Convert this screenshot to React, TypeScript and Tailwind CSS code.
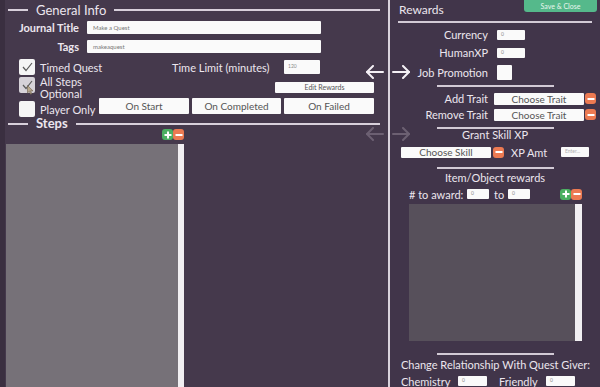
import React from 'react';

const font = { fontFamily: 'Lato, "Liberation Sans", sans-serif' };

function Arrow({ dir, faded }: { dir: 'left' | 'right'; faded?: boolean }) {
  const color = faded ? '#6c6072' : '#f4f0f5';
  return (
    <svg width="19" height="14" viewBox="0 0 19 14" fill="none" stroke={color} strokeWidth="2" strokeLinecap="round" strokeLinejoin="round">
      {dir === 'left' ? (
        <>
          <path d="M2 7 H18" />
          <path d="M8 1 L2 7 L8 13" />
        </>
      ) : (
        <>
          <path d="M1 7 H17" />
          <path d="M11 1 L17 7 L11 13" />
        </>
      )}
    </svg>
  );
}

function PlusBtn() {
  return (
    <div className="w-[11px] h-[11px] rounded-[3px] bg-[#4caf62] flex items-center justify-center">
      <svg width="8" height="8" viewBox="0 0 8 8" stroke="white" strokeWidth="2">
        <path d="M4 0.5 V7.5 M0.5 4 H7.5" />
      </svg>
    </div>
  );
}

function MinusBtn() {
  return (
    <div className="w-[11px] h-[11px] rounded-[3px] bg-[#ec7a52] flex items-center justify-center">
      <svg width="8" height="8" viewBox="0 0 8 8" stroke="white" strokeWidth="2">
        <path d="M0.5 4 H7.5" />
      </svg>
    </div>
  );
}

function Check({ shade }: { shade?: boolean }) {
  return (
    <div className={`w-[16px] h-[16px] rounded-[2px] flex items-center justify-center ${shade ? 'bg-[#d6d2d8]' : 'bg-[#f5f5f5]'}`}>
      <svg width="11" height="10" viewBox="0 0 11 10" fill="none" stroke="#5a5a5a" strokeWidth="1.2">
        <path d="M1 5 L4 8.5 L10 1" />
      </svg>
    </div>
  );
}

function SectionTitle({ children, bold }: { children: React.ReactNode; bold?: boolean }) {
  return (
    <div className="flex items-center h-full pr-[8px]">
      <div className="ml-[3px] w-[20px] h-[2px] bg-[#d8d0db]" />
      <span className={`mx-[8px] text-[13px] leading-none text-[#ece6ee] ${bold ? 'font-bold' : ''}`}>{children}</span>
      <div className="flex-1 h-[2px] bg-[#d8d0db]" />
    </div>
  );
}

function SmallInput({ value, w, h = 'h-[10px]', placeholder }: { value?: string; w: string; h?: string; placeholder?: string }) {
  return (
    <div className={`${w} ${h} bg-[#fafafa] rounded-[1px] flex items-center pl-[4px] text-[5px] ${placeholder ? 'text-[#b0b0b0]' : 'text-[#8a8a8a]'}`}>
      {value ?? placeholder}
    </div>
  );
}

function WhiteButton({ label, w, h, size }: { label: string; w: string; h: string; size: string }) {
  return (
    <div className={`${w} ${h} bg-[#fafafa] rounded-[1px] flex items-center justify-center ${size} text-[#555] leading-none`}>
      {label}
    </div>
  );
}

function Line() {
  return <div className="mx-auto w-[117px] h-[2px] bg-[#d2cad5]" />;
}

export default function App() {
  return (
    <div className="relative w-[600px] h-[387px] flex overflow-hidden bg-[#43374a] text-[#ece6ee]" style={font}>
      {/* left panel */}
      <div className="w-[388px] h-full flex flex-col border-l-[5px] border-[#3a2f40] bg-[#45394c]">
        <div className="h-[20px]">
          <SectionTitle>General Info</SectionTitle>
        </div>

        <div className="mt-[1px] h-[13px] flex items-center">
          <div className="w-[74px] text-right text-[11px] font-bold leading-none">Journal Title</div>
          <div className="ml-[8px] w-[234px] h-[13px] bg-[#fafafa] rounded-[1px] flex items-center pl-[6px] text-[6px] text-[#777]">Make a Quest</div>
        </div>
        <div className="mt-[6px] h-[13px] flex items-center">
          <div className="w-[74px] text-right text-[11px] font-bold leading-none">Tags</div>
          <div className="ml-[8px] w-[234px] h-[13px] bg-[#fafafa] rounded-[1px] flex items-center pl-[6px] text-[6px] text-[#777]">makeaquest</div>
        </div>

        {/* row: timed quest */}
        <div className="mt-[6px] h-[16px] w-[369px] flex items-center">
          <div className="ml-[14px]"><Check /></div>
          <div className="ml-[5px] w-[132px] text-[11px] leading-none">Timed Quest</div>
          <div className="w-[112px] text-[11px] leading-none">Time Limit (minutes)</div>
          <SmallInput value="120" w="w-[36px]" h="h-[14px]" />
        </div>

        {/* row: all steps optional */}
        <div className="mt-[2px] h-[19px] w-[369px] flex items-start">
          <div className="ml-[14px] relative">
            <Check shade />
            <svg className="absolute left-[8px] top-[8px]" width="7" height="10" viewBox="0 0 7 10">
              <path d="M0.5 0.5 L0.5 8 L2.3 6.3 L3.6 9.3 L4.8 8.8 L3.6 5.9 L6 5.9 Z" fill="#b9a88b" stroke="#6b5f4f" strokeWidth="0.6" />
            </svg>
          </div>
          <div className="ml-[5px] text-[11px] leading-[12px] -mt-[1px]">All Steps<br />Optional</div>
          <div className="ml-auto mt-[5px]">
            <WhiteButton label="Edit Rewards" w="w-[99px]" h="h-[11px]" size="text-[7px]" />
          </div>
        </div>

        {/* row: player only + buttons */}
        <div className="mt-[2px] h-[19px] w-[369px] flex items-start">
          <div className="ml-[14px] mt-[3px] w-[16px] h-[16px] rounded-[2px] bg-[#f5f5f5]" />
          <div className="ml-[5px] mt-[6px] text-[11px] leading-none">Player Only</div>
          <div className="ml-auto flex gap-[3px]">
            <WhiteButton label="On Start" w="w-[90px]" h="h-[16px]" size="text-[10px]" />
            <WhiteButton label="On Completed" w="w-[89px]" h="h-[16px]" size="text-[10px]" />
            <WhiteButton label="On Failed" w="w-[90px]" h="h-[16px]" size="text-[10px]" />
          </div>
        </div>

        <div className="mt-[1px] h-[11px]">
          <SectionTitle bold>Steps</SectionTitle>
        </div>
        <div className="h-[11px] pl-[157px] flex items-center">
          <PlusBtn />
          <MinusBtn />
        </div>

        <div className="mt-[4px] flex-1 flex ml-[1px]">
          <div className="w-[172px] h-full bg-[#767178]" />
          <div className="w-[6px] h-full bg-[#f1eff2]" />
        </div>
      </div>

      {/* divider */}
      <div className="w-[2px] h-full bg-[#d9d3dc]" />

      {/* right panel */}
      <div className="flex-1 h-full flex flex-col bg-[#41354a]">
        <div className="h-[21px] flex items-center pl-[9px] text-[12px] leading-none">Rewards</div>
        <div className="ml-[8px] w-[194px] h-[2px] bg-[#d2cad5]" />

        <div className="mt-[6px] h-[12px] flex items-center">
          <div className="w-[98px] text-right text-[11px] leading-none">Currency</div>
          <div className="ml-[9px]"><SmallInput value="0" w="w-[28px]" /></div>
        </div>
        <div className="mt-[6px] h-[12px] flex items-center">
          <div className="w-[98px] text-right text-[11px] leading-none">HumanXP</div>
          <div className="ml-[9px]"><SmallInput value="0" w="w-[28px]" /></div>
        </div>
        <div className="mt-[6px] h-[16px] flex items-center">
          <div className="w-[98px] text-right text-[11px] leading-none">Job Promotion</div>
          <div className="ml-[9px] w-[15px] h-[15px] bg-[#fafafa] rounded-[1px]" />
        </div>

        <div className="mt-[4px]"><Line /></div>

        <div className="mt-[6px] h-[12px] flex items-center">
          <div className="w-[98px] text-right text-[11px] leading-none">Add Trait</div>
          <div className="ml-[6px]"><WhiteButton label="Choose Trait" w="w-[90px]" h="h-[12px]" size="text-[10px]" /></div>
          <div className="ml-[1px]"><MinusBtn /></div>
        </div>
        <div className="mt-[4px] h-[12px] flex items-center">
          <div className="w-[98px] text-right text-[11px] leading-none">Remove Trait</div>
          <div className="ml-[6px]"><WhiteButton label="Choose Trait" w="w-[90px]" h="h-[12px]" size="text-[10px]" /></div>
          <div className="ml-[1px]"><MinusBtn /></div>
        </div>

        <div className="mt-[6px]"><Line /></div>
        <div className="h-[12px] flex items-center justify-center text-[11px] leading-none">Grant Skill XP</div>

        <div className="mt-[6px] h-[11px] flex items-center">
          <div className="ml-[11px]"><WhiteButton label="Choose Skill" w="w-[90px]" h="h-[11px]" size="text-[10px]" /></div>
          <div className="ml-[2px]"><MinusBtn /></div>
          <div className="ml-[7px] w-[50px] text-[11px] leading-none">XP Amt</div>
          <SmallInput placeholder="Enter..." w="w-[28px]" />
        </div>

        <div className="mt-[9px]"><Line /></div>
        <div className="mt-[3px] h-[12px] flex items-center justify-center text-[11px] leading-none">Item/Object rewards</div>

        <div className="mt-[5px] h-[11px] flex items-center">
          <div className="ml-[19px] w-[58px] text-[11px] leading-none">
            # to award:
          </div>
          <SmallInput value="0" w="w-[22px]" />
          <div className="ml-[5px] w-[14px] text-[11px] leading-none">to</div>
          <SmallInput value="0" w="w-[22px]" />
          <div className="ml-[30px] flex">
            <PlusBtn />
            <MinusBtn />
          </div>
        </div>

        <div className="mt-[4px] ml-[19px] h-[138px] flex">
          <div className="w-[166px] h-full bg-[#57505b]" />
          <div className="w-[7px] h-full bg-[#f1eff2]" />
        </div>

        <div className="mt-[12px]"><Line /></div>
        <div className="mt-[3px] h-[12px] flex items-center pl-[11px] text-[11px] leading-none whitespace-nowrap">
          Change Relationship With Quest Giver:
        </div>
        <div className="mt-[5px] h-[12px] flex items-center">
          <div className="ml-[11px] w-[57px] text-[11px] leading-none">Chemistry</div>
          <SmallInput value="0" w="w-[29px]" />
          <div className="ml-[12px] w-[47px] text-[11px] leading-none">Friendly</div>
          <SmallInput value="0" w="w-[29px]" />
        </div>
      </div>

      {/* connector arrows across the divider */}
      <div className="absolute left-[365px] top-[65px]"><Arrow dir="left" /></div>
      <div className="absolute left-[392px] top-[65px]"><Arrow dir="right" /></div>
      <div className="absolute left-[365px] top-[127px]"><Arrow dir="left" faded /></div>
      <div className="absolute left-[392px] top-[127px]"><Arrow dir="right" faded /></div>

      {/* save button */}
      <div className="absolute right-[3px] top-0 w-[73px] h-[12px] rounded-b-[3px] bg-[#55b98b] flex items-center justify-center text-[7px] text-[#e8f6ee] leading-none">
        Save &amp; Close
      </div>
    </div>
  );
}
